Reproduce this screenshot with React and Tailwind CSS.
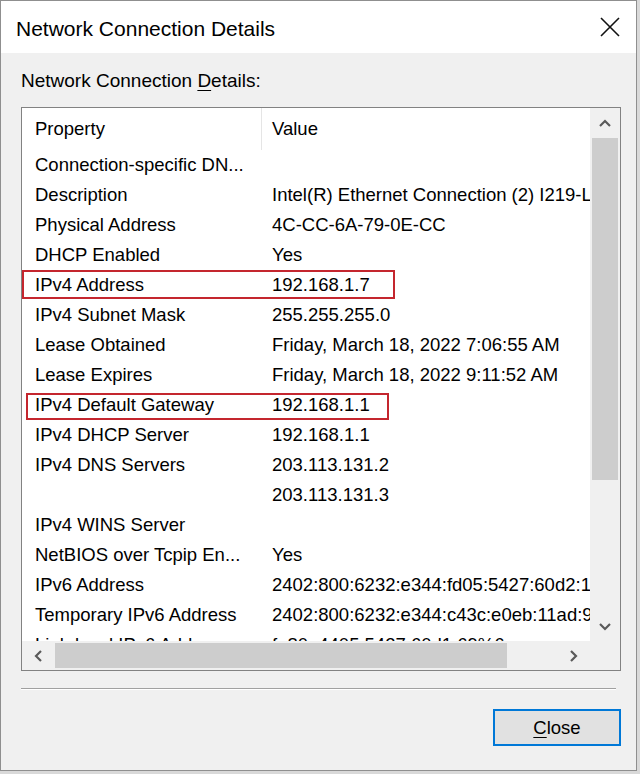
import React from "react";

const rows = [
  ["Connection-specific DN...", ""],
  ["Description", "Intel(R) Ethernet Connection (2) I219-LM"],
  ["Physical Address", "4C-CC-6A-79-0E-CC"],
  ["DHCP Enabled", "Yes"],
  ["IPv4 Address", "192.168.1.7"],
  ["IPv4 Subnet Mask", "255.255.255.0"],
  ["Lease Obtained", "Friday, March 18, 2022 7:06:55 AM"],
  ["Lease Expires", "Friday, March 18, 2022 9:11:52 AM"],
  ["IPv4 Default Gateway", "192.168.1.1"],
  ["IPv4 DHCP Server", "192.168.1.1"],
  ["IPv4 DNS Servers", "203.113.131.2"],
  ["", "203.113.131.3"],
  ["IPv4 WINS Server", ""],
  ["NetBIOS over Tcpip En...", "Yes"],
  ["IPv6 Address", "2402:800:6232:e344:fd05:5427:60d2:1c"],
  ["Temporary IPv6 Address", "2402:800:6232:e344:c43c:e0eb:11ad:9b"],
  ["Link-local IPv6 Address", "fe80::4405:5427:60d1:69%6"],
];

function Chevron({ dir }) {
  const d = {
    up: "M1 7 L6 2 L11 7",
    down: "M1 2 L6 7 L11 2",
    left: "M7 1 L2 6 L7 11",
    right: "M2 1 L7 6 L2 11",
  }[dir];
  const vertical = dir === "up" || dir === "down";
  return (
    <svg
      width={vertical ? 12 : 9}
      height={vertical ? 9 : 12}
      viewBox={vertical ? "0 0 12 9" : "0 0 9 12"}
      fill="none"
      stroke="#5a5a5a"
      strokeWidth="2.2"
    >
      <path d={d} />
    </svg>
  );
}

export default function App() {
  return (
    <div
      className="w-[640px] h-[774px] bg-[#d9d9d9] overflow-hidden"
      style={{ fontFamily: '"Liberation Sans", Arial, sans-serif' }}
    >
      <div className="w-[637px] h-[771px] border border-[#8f8f8f] bg-[#f0f0f0] flex flex-col text-black">
        {/* Title bar */}
        <div className="h-[52px] bg-white flex items-center justify-between pl-[15px] pr-[15px] shrink-0">
          <span className="text-[21px] mt-[4px]">Network Connection Details</span>
          <svg width="22" height="22" viewBox="0 0 22 22" stroke="#111" strokeWidth="1.6">
            <path d="M2 2 L20 20 M20 2 L2 20" />
          </svg>
        </div>

        {/* Body */}
        <div className="flex-1 flex flex-col pl-[20px] pr-[15px]">
          <div className="text-[19px] h-[54px] flex items-center pt-[2px] whitespace-pre">
            {"Network Connection "}
            <span className="underline underline-offset-[3px]">D</span>
            {"etails:"}
          </div>

          {/* List box */}
          <div className="relative w-[600px] h-[564px] border border-[#828282] bg-white flex flex-col">
            <div className="flex h-[533px]">
              <div className="w-[568px] overflow-hidden text-[18.5px]">
                <div className="flex h-[42px] items-center">
                  <div className="w-[240px] pl-[13px] border-r border-[#e5e5e5] h-full flex items-center">
                    Property
                  </div>
                  <div className="pl-[10px]">Value</div>
                </div>
                {rows.map(([k, v], i) => (
                  <div key={i} className="flex h-[30px] items-center whitespace-nowrap">
                    <div className="w-[240px] pl-[13px] shrink-0 overflow-hidden">{k}</div>
                    <div className="pl-[10px]">{v}</div>
                  </div>
                ))}
              </div>
              {/* Vertical scrollbar */}
              <div className="w-[30px] bg-[#f0f0f0] flex flex-col">
                <div className="h-[30px] flex items-center justify-center">
                  <Chevron dir="up" />
                </div>
                <div className="h-[342px] mx-[2px] bg-[#cdcdcd]" />
                <div className="flex-1" />
                <div className="h-[30px] flex items-center justify-center">
                  <Chevron dir="down" />
                </div>
              </div>
            </div>
            {/* Horizontal scrollbar */}
            <div className="flex h-[29px] bg-[#f0f0f0]">
              <div className="w-[33px] flex items-center justify-center">
                <Chevron dir="left" />
              </div>
              <div className="w-[452px] my-[2px] bg-[#cdcdcd]" />
              <div className="w-[83px] flex items-center justify-end pr-[12px]">
                <Chevron dir="right" />
              </div>
              <div className="w-[30px]" />
            </div>

            {/* Highlight boxes */}
            <div className="absolute left-[0px] top-[162px] w-[373px] h-[29px] border-2 border-[#c4262e]" />
            <div className="absolute left-[4px] top-[285px] w-[363px] h-[27px] border-2 border-[#c4262e]" />
          </div>

          {/* Separator */}
          <div className="mt-[17px] w-[595px] border-t border-[#a0a0a0] border-b border-b-white" />

          {/* Button */}
          <div className="flex justify-end w-[600px] mt-[19px]">
            <button className="w-[128px] h-[37px] bg-[#e1e1e1] border-2 border-[#0078d7] text-[18.5px] flex items-center justify-center">
              <span>
                <span className="underline underline-offset-[3px]">C</span>lose
              </span>
            </button>
          </div>
        </div>
      </div>
    </div>
  );
}
